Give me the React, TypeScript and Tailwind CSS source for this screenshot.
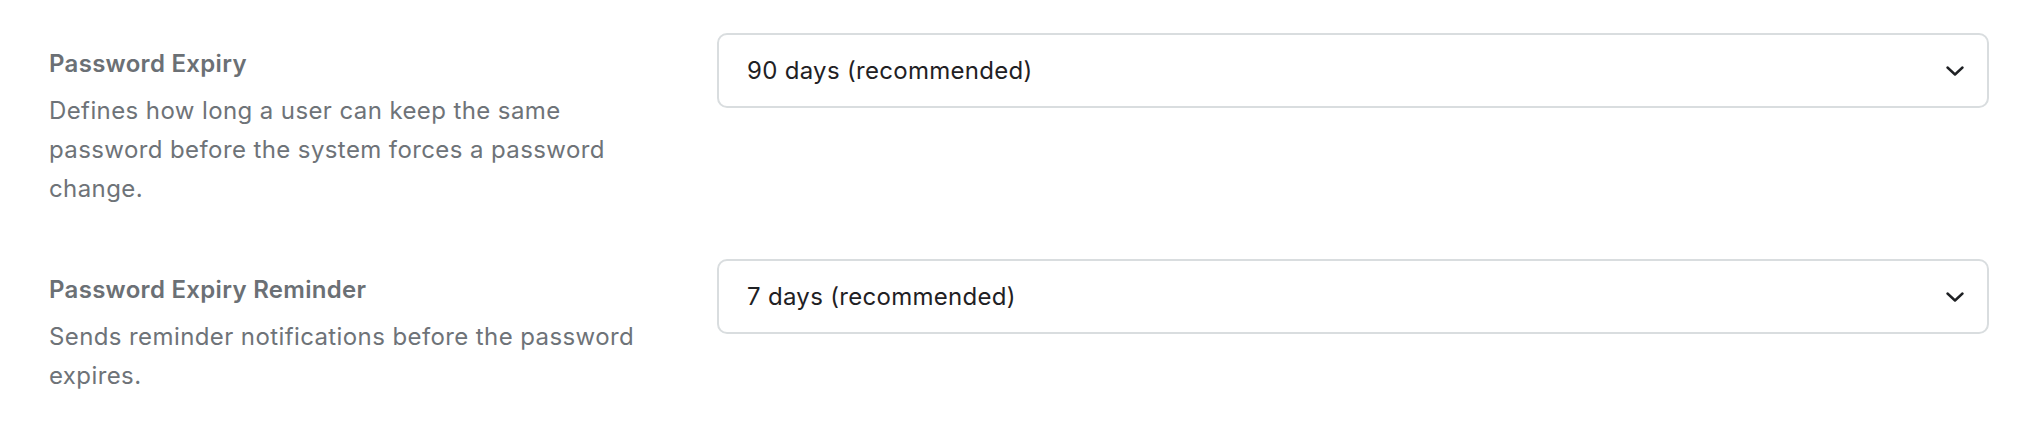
import { useState } from 'react';

type Setting = {
  title: string;
  description: string;
  value: string;
  options: string[];
};

const settings: Setting[] = [
  {
    title: 'Password Expiry',
    description: 'Defines how long a user can keep the same password before the system forces a password change.',
    value: '90 days (recommended)',
    options: ['30 days', '60 days', '90 days (recommended)', '180 days', 'Never'],
  },
  {
    title: 'Password Expiry Reminder',
    description: 'Sends reminder notifications before the password expires.',
    value: '7 days (recommended)',
    options: ['1 day', '3 days', '7 days (recommended)', '14 days'],
  },
];

function Chevron() {
  return (
    <svg width="18" height="10" viewBox="0 0 18 10" fill="none" className="shrink-0">
      <path d="M1.5 1.5L9 8.5L16.5 1.5" stroke="#1f2124" strokeWidth="2.4" strokeLinecap="round" strokeLinejoin="round" />
    </svg>
  );
}

function SettingRow({ s }: { s: Setting }) {
  const [value] = useState(s.value);
  return (
    <div className="flex items-start">
      <div className="w-[600px] shrink-0 pt-[11px]">
        <p className="text-[24px] leading-[39px] font-semibold tracking-[0.3px] text-[#6b7075]">{s.title}</p>
        <p className="mt-[8px] text-[24px] leading-[39px] tracking-[0.4px] text-[#6e7378]">{s.description}</p>
      </div>
      <button className="ml-[68px] flex-1 h-[75px] flex items-center justify-between pl-[28px] pr-[23px] bg-white border-2 border-[#d9dddf] rounded-[10px] text-left">
        <span className="text-[24px] tracking-[0.3px] text-[#1f2124]">{value}</span>
        <Chevron />
      </button>
    </div>
  );
}

export default function App() {
  return (
    <div className="min-h-[448px] bg-white pl-[49px] pr-[41px] pt-[33px] font-['Inter',sans-serif]">
      <div className="flex flex-col gap-[51px]">
        {settings.map(s => <SettingRow key={s.title} s={s} />)}
      </div>
    </div>
  );
}
